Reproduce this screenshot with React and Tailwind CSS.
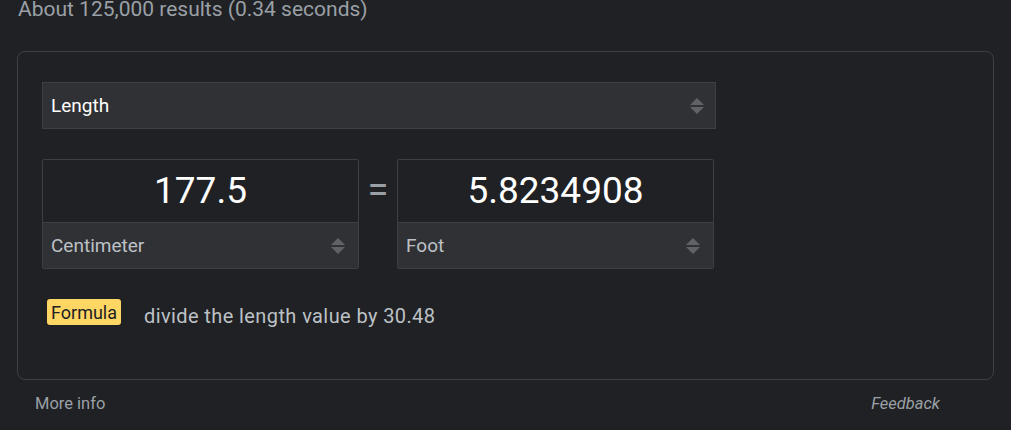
import React from "react";

function Arrows() {
  return (
    <svg width="14" height="16" viewBox="0 0 14 16" className="shrink-0">
      <path d="M7 0 L14 7 L0 7 Z" fill="#5f6368" />
      <path d="M0 9 L14 9 L7 16 Z" fill="#5f6368" />
    </svg>
  );
}

function UnitBox({ value, unit }) {
  return (
    <div className="w-[317px] h-[110px] flex flex-col border border-[#3c4043] rounded-[2px] overflow-hidden">
      <div className="h-[62px] flex items-center justify-center text-[37px] text-white">
        {value}
      </div>
      <div className="flex-1 flex items-center justify-between bg-[#303134] border-t border-[#3c4043] pl-[8px] pr-[13px]">
        <span className="pt-[2px] text-[19px] text-[#bdc1c6]">{unit}</span>
        <Arrows />
      </div>
    </div>
  );
}

export default function App() {
  return (
    <div
      className="w-full h-[430px] bg-[#202124] overflow-hidden"
      style={{ fontFamily: "Roboto, Arial, sans-serif" }}
    >
      <div className="pl-[18px] -mt-[3px] text-[21px] leading-[25px] text-[#9aa0a6]">
        About 125,000 results (0.34 seconds)
      </div>

      <div className="ml-[17px] mt-[29px] w-[977px] h-[329px] border border-[#3c4043] rounded-[8px] pl-[24px] pt-[30px]">
        <div className="w-[674px] h-[47px] bg-[#303134] border border-[#3c4043] flex items-center justify-between pl-[8px] pr-[11px]">
          <span className="pt-[2px] text-[19px] text-white">Length</span>
          <Arrows />
        </div>

        <div className="flex items-start mt-[30px]">
          <UnitBox value="177.5" unit="Centimeter" />
          <div className="w-[38px] h-[62px] flex items-center justify-center text-[38px] text-[#9aa0a6]">
            =
          </div>
          <UnitBox value="5.8234908" unit="Foot" />
        </div>

        <div className="flex items-start mt-[30px]">
          <span className="ml-[5px] h-[26px] px-[4px] flex items-center bg-[#fdd663] text-[#202124] text-[18px] rounded-[3px]">
            Formula
          </span>
          <span className="ml-[23px] mt-[3px] text-[20px] leading-[28px] tracking-[0.4px] text-[#bdc1c6]">
            divide the length value by 30.48
          </span>
        </div>
      </div>

      <div className="flex justify-between pl-[35px] pr-[71px] mt-[12px] text-[16.5px] text-[#9aa0a6]">
        <span>More info</span>
        <span className="italic">Feedback</span>
      </div>
    </div>
  );
}
